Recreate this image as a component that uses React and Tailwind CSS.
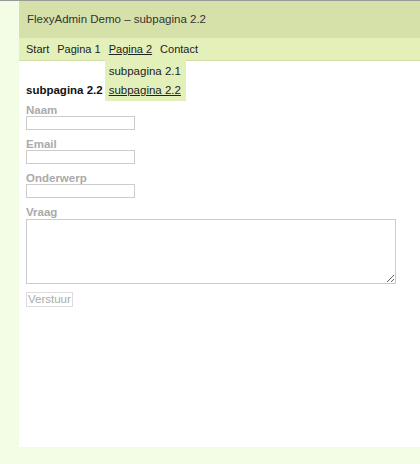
import React from "react";

const font = { fontFamily: '"Liberation Sans", Arial, sans-serif' };

function Field({ label, children }) {
  return (
    <div className="mb-[8px]">
      <label className="block text-[11.5px] font-bold leading-[12px] text-[#aaaaaa]">
        {label}
      </label>
      {children}
    </div>
  );
}

export default function App() {
  return (
    <div
      className="min-h-[464px] border-t border-[#999999] bg-[#f3fce4] pb-[17px] pl-[19px]"
      style={font}
    >
      <div className="flex h-[37px] items-center bg-[#d6e1a9] pl-[8px] text-[11.5px] text-[#333333]">
        FlexyAdmin Demo – subpagina 2.2
      </div>
      <nav className="relative flex h-[23px] items-center gap-[8px] border-b border-[#d3dfa6] bg-[#e4f0ba] pl-[7px] text-[11px] text-[#222222]">
        <a>Start</a>
        <a>Pagina 1</a>
        <div className="relative">
          <a className="underline">Pagina 2</a>
          <div className="absolute left-[-4px] top-[17px] z-10 flex w-[81px] flex-col gap-[4px] whitespace-nowrap bg-[#e4f0ba] px-[4px] pb-[3px] pt-[6px] text-[11.5px] leading-[15px]">
            <a>subpagina 2.1</a>
            <a className="underline">subpagina 2.2</a>
          </div>
        </div>
        <a>Contact</a>
      </nav>
      <div className="h-[386px] bg-white pl-[7px] pt-[21px]">
        <h2 className="mb-[6px] text-[11.5px] font-bold leading-[16px] text-[#111111]">
          subpagina 2.2
        </h2>
        <form>
          <Field label="Naam">
            <input className="block h-[14px] w-[109px] border border-[#cccccc]" />
          </Field>
          <Field label="Email">
            <input className="block h-[14px] w-[109px] border border-[#cccccc]" />
          </Field>
          <Field label="Onderwerp">
            <input className="block h-[14px] w-[109px] border border-[#cccccc]" />
          </Field>
          <Field label="Vraag">
            <textarea className="mt-[1px] block h-[65px] w-[370px] border border-[#cccccc]" />
          </Field>
          <button
            type="button"
            className="block h-[15px] border border-[#dddddd] px-[1px] text-[11.5px] leading-[13px] text-[#aaaaaa]"
          >
            Verstuur
          </button>
        </form>
      </div>
    </div>
  );
}
